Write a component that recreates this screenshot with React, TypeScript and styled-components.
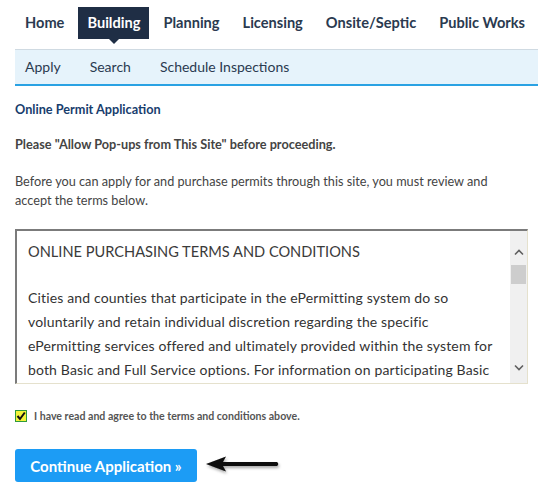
import { styled, createGlobalStyle } from 'styled-components'

const GlobalStyle = createGlobalStyle`
  html, body {
    margin: 0;
    padding: 0;
    background: #fff;
  }
  body {
    font-family: Lato, "Open Sans", "Liberation Sans", sans-serif;
    color: #333;
  }
`

const topTabs = ['Home', 'Building', 'Planning', 'Licensing', 'Onsite/Septic', 'Public Works']
const subTabs = ['Apply', 'Search', 'Schedule Inspections']

// the terms excerpt as it is broken in the scroll box
const termsLines = [
  'Cities and counties that participate in the ePermitting system do so',
  'voluntarily and retain individual discretion regarding the specific',
  'ePermitting services offered and ultimately provided within the system for',
  'both Basic and Full Service options. For information on participating Basic',
]

function Chevron({ up }: { up?: boolean }) {
  return (
    <svg width="10" height="7" viewBox="0 0 10 7">
      <path
        d={up ? 'M1 5.5 L5 1.5 L9 5.5' : 'M1 1.5 L5 5.5 L9 1.5'}
        fill="none"
        stroke="#5f5f5f"
        strokeWidth="1.6"
      />
    </svg>
  )
}

function PointerArrow() {
  return (
    <svg width="78" height="28" viewBox="0 0 78 28">
      <defs>
        <filter id="shadow" x="-20%" y="-50%" width="140%" height="200%">
          <feDropShadow dx="1" dy="2" stdDeviation="1.5" floodColor="#000" floodOpacity="0.35" />
        </filter>
      </defs>
      <g filter="url(#shadow)">
        <path d="M1 12 L21 4.5 L18 10 L72 10 Q74.5 12 72 14 L18 14 L21 19.5 Z" fill="#0c0c0c" />
      </g>
    </svg>
  )
}

export default function App() {
  return (
    <>
      <GlobalStyle />
      <Page>
        <TopNav>
          {topTabs.map((t) => (
            <NavItem key={t} $active={t === 'Building'}>
              {t}
            </NavItem>
          ))}
        </TopNav>
        <SubNav>
          {subTabs.map((t) => (
            <SubItem key={t}>{t}</SubItem>
          ))}
        </SubNav>

        <Title>Online Permit Application</Title>
        <Notice>Please "Allow Pop-ups from This Site" before proceeding.</Notice>
        <Intro>
          Before you can apply for and purchase permits through this site, you must review and accept the
          terms below.
        </Intro>

        <TermsBox>
          <TermsBody>
            <TermsHeading>ONLINE PURCHASING TERMS AND CONDITIONS</TermsHeading>
            <TermsText>
              {termsLines.map((line) => (
                <TermsLine key={line}>{line}</TermsLine>
              ))}
              <TermsLine>
                and Full Service cities and counties, <TermsLink>click here</TermsLink>.
              </TermsLine>
            </TermsText>
          </TermsBody>
          <Scrollbar>
            <ScrollArrow $top>
              <Chevron up />
            </ScrollArrow>
            <Thumb />
            <ScrollSpacer />
            <ScrollArrow>
              <Chevron />
            </ScrollArrow>
          </Scrollbar>
        </TermsBox>

        <AgreeRow>
          <CheckBox>
            <svg width="10" height="10" viewBox="0 0 10 10">
              <path d="M1.5 5 L4 8 L8.8 1.5" fill="none" stroke="#111" strokeWidth="2" />
            </svg>
          </CheckBox>
          <AgreeLabel>I have read and agree to the terms and conditions above.</AgreeLabel>
        </AgreeRow>

        <ActionRow>
          <ContinueButton>Continue Application »</ContinueButton>
          <PointerArrow />
        </ActionRow>
      </Page>
    </>
  )
}

const Page = styled.div`
  padding: 7px 0 0 15px;
`

const TopNav = styled.nav`
  display: flex;
  gap: 5px;
  margin-left: 1px;
`

const NavItem = styled.div<{ $active?: boolean }>`
  position: relative;
  height: 32px;
  line-height: 32px;
  padding: 0 9px;
  font-size: 14.6px;
  font-weight: 700;
  color: ${({ $active }) => ($active ? '#fff' : '#2a3a50')};
  background: ${({ $active }) => ($active ? '#1f2e45' : 'transparent')};

  &::after {
    content: '';
    display: ${({ $active }) => ($active ? 'block' : 'none')};
    position: absolute;
    left: 50%;
    bottom: -5px;
    margin-left: -5px;
    border-left: 5px solid transparent;
    border-right: 5px solid transparent;
    border-top: 5px solid #1f2e45;
  }
`

const SubNav = styled.div`
  display: flex;
  gap: 9px;
  margin-top: 10px;
  height: 34px;
  align-items: center;
  background: #e6f3fb;
  border-top: 1px solid #cfdae2;
  border-bottom: 2px solid #2aa2e3;
`

const SubItem = styled.div`
  padding: 0 10px 1px;
  font-size: 14px;
  color: #2a3a50;
`

const Title = styled.div`
  margin-top: 16px;
  font-size: 12.7px;
  line-height: 14px;
  font-weight: 700;
  color: #173d6d;
`

const Notice = styled.div`
  margin-top: 21px;
  font-size: 12.7px;
  line-height: 14px;
  font-weight: 700;
  color: #444;
`

const Intro = styled.p`
  margin: 21px 0 0;
  padding-right: 30px;
  font-size: 12.7px;
  line-height: 19px;
  color: #444;
`

const TermsBox = styled.div`
  display: flex;
  margin-top: 19px;
  width: 513px;
  height: 155px;
  box-sizing: border-box;
  border-top: 2px solid #7b7b7b;
  border-left: 2px solid #7b7b7b;
  border-right: 1px solid #e5e1cd;
  border-bottom: 1px solid #e5e1cd;
  overflow: hidden;
`

const TermsBody = styled.div`
  flex: 1;
  padding: 11px 4px 0 11px;
  overflow: hidden;
`

const TermsHeading = styled.div`
  font-size: 14.6px;
  line-height: 20px;
  color: #3b3b3b;
`

const TermsText = styled.div`
  margin-top: 24px;
  font-size: 14px;
  line-height: 24px;
  color: #333;
  letter-spacing: 0.15px;
`

const TermsLine = styled.div`
  white-space: nowrap;
`

const TermsLink = styled.span`
  color: #1a9cf5;
`

const Scrollbar = styled.div`
  display: flex;
  flex-direction: column;
  align-items: center;
  width: 17px;
  background: #f0f0f0;
`

const ScrollArrow = styled.div<{ $top?: boolean }>`
  display: flex;
  align-items: center;
  justify-content: center;
  height: 12px;
  margin-top: ${({ $top }) => ($top ? '15px' : '0')};
  margin-bottom: ${({ $top }) => ($top ? '0' : '10px')};
`

const Thumb = styled.div`
  margin-top: 7px;
  width: 15px;
  height: 19px;
  background: #cdcdcd;
`

const ScrollSpacer = styled.div`
  flex: 1;
`

const AgreeRow = styled.label`
  display: flex;
  align-items: center;
  gap: 7px;
  margin-top: 24px;
  height: 16px;
`

const CheckBox = styled.span`
  display: flex;
  align-items: center;
  justify-content: center;
  width: 12px;
  height: 12px;
  box-sizing: border-box;
  background: #f4f43a;
  border: 1px solid #2f9a3c;
`

const AgreeLabel = styled.span`
  font-size: 10.6px;
  font-weight: 700;
  color: #555;
`

const ActionRow = styled.div`
  display: flex;
  align-items: center;
  gap: 8px;
  margin-top: 25px;
`

const ContinueButton = styled.button`
  width: 182px;
  height: 33px;
  border: none;
  border-radius: 3px;
  background: #1c9cf5;
  color: #fff;
  font-family: inherit;
  font-size: 15px;
  font-weight: 700;
  cursor: pointer;
`
